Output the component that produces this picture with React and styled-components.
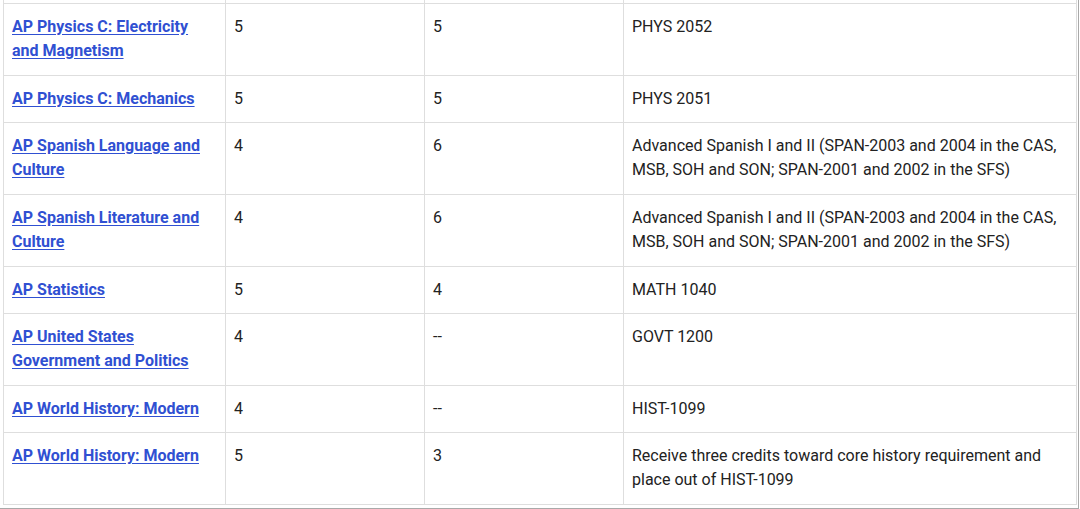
import React from "react";
import styled, { createGlobalStyle } from "styled-components";

const Global = createGlobalStyle`
  html, body { margin: 0; padding: 0; background: #fff; }
  body { font-family: Roboto, "Liberation Sans", Arial, sans-serif; }
`;

const Frame = styled.div`
  width: 1079px;
  box-sizing: border-box;
  padding: 0 1px 3px 3px;
  border-right: 1px solid #a9a9a9;
  border-bottom: 1px solid #a9a9a9;
`;

const Table = styled.table`
  width: 1074px;
  table-layout: fixed;
  border-collapse: collapse;
  font-family: Roboto, "Liberation Sans", Arial, sans-serif;
  font-size: 16px;
  line-height: 24px;
  color: #222;
`;

const Cell = styled.td`
  border: 1px solid #dedede;
  padding: 11px 8px ${(p) => (p.$tall ? "12px" : "11px")} 8px;
  vertical-align: top;
  text-align: left;
`;

const SpacerCell = styled.td`
  border-left: 1px solid #dedede;
  border-right: 1px solid #dedede;
  border-top: none;
  height: 3px;
  padding: 0;
  font-size: 0;
  line-height: 0;
`;

const CourseLink = styled.a`
  color: #3050d2;
  font-weight: 700;
  text-decoration: underline;
  text-underline-offset: 2px;
`;

const rows = [
  { course: "AP Physics C: Electricity and Magnetism", score: "5", credits: "5", equiv: "PHYS 2052", tall: true },
  { course: "AP Physics C: Mechanics", score: "5", credits: "5", equiv: "PHYS 2051" },
  { course: "AP Spanish Language and Culture", score: "4", credits: "6", equiv: "Advanced Spanish I and II (SPAN-2003 and 2004 in the CAS, MSB, SOH and SON; SPAN-2001 and 2002 in the SFS)", tall: true },
  { course: "AP Spanish Literature and Culture", score: "4", credits: "6", equiv: "Advanced Spanish I and II (SPAN-2003 and 2004 in the CAS, MSB, SOH and SON; SPAN-2001 and 2002 in the SFS)", tall: true },
  { course: "AP Statistics", score: "5", credits: "4", equiv: "MATH 1040" },
  { course: "AP United States Government and Politics", score: "4", credits: "--", equiv: "GOVT 1200", tall: true },
  { course: "AP World History: Modern", score: "4", credits: "--", equiv: "HIST-1099" },
  { course: "AP World History: Modern", score: "5", credits: "3", equiv: "Receive three credits toward core history requirement and place out of HIST-1099", tall: true },
];

export default function App() {
  return (
    <>
      <Global />
      <Frame>
        <Table>
          <colgroup>
            <col style={{ width: 222 }} />
            <col style={{ width: 199 }} />
            <col style={{ width: 199 }} />
            <col />
          </colgroup>
          <tbody>
            <tr>
              <SpacerCell />
              <SpacerCell />
              <SpacerCell />
              <SpacerCell />
            </tr>
            {rows.map((r, i) => (
              <tr key={i}>
                <Cell $tall={r.tall}>
                  <CourseLink href="#">{r.course}</CourseLink>
                </Cell>
                <Cell $tall={r.tall}>{r.score}</Cell>
                <Cell $tall={r.tall}>{r.credits}</Cell>
                <Cell $tall={r.tall}>{r.equiv}</Cell>
              </tr>
            ))}
          </tbody>
        </Table>
      </Frame>
    </>
  );
}
